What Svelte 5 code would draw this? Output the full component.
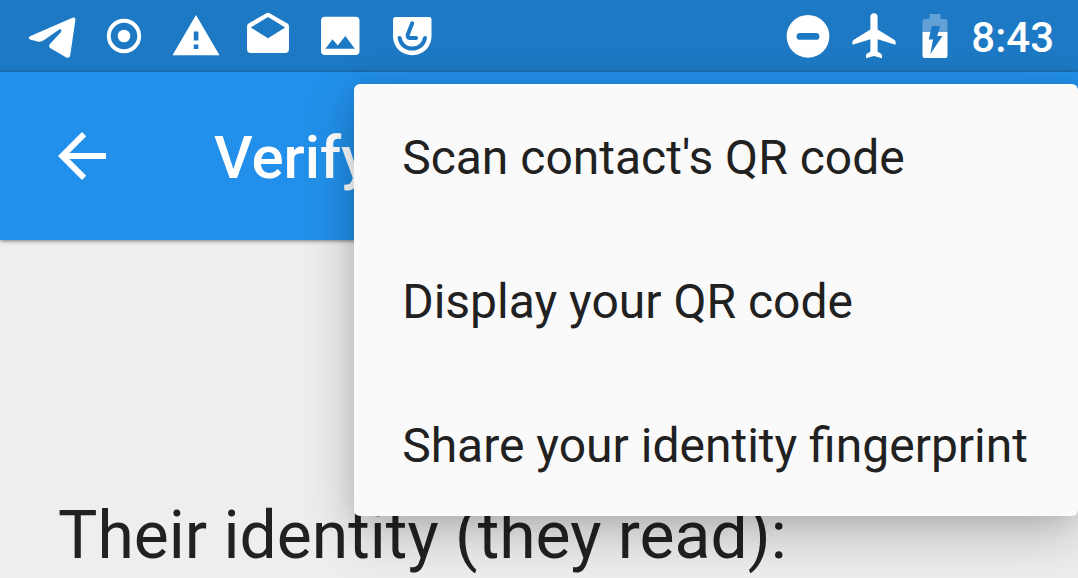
<script>
  const actions = [
    "Scan contact's QR code",
    'Display your QR code',
    'Share your identity fingerprint'
  ];
</script>

<div class="screen">
  <header class="status">
    <div class="notices">
      <svg viewBox="0 0 72 72" aria-hidden="true">
        <path d="M14 36.2 56.5 17.7Q59.7 16.7 59.4 20L54.2 55.5Q53.4 58.8 50.4 57.5L34.5 48.2Q32 46.5 34 44L45.2 31.8Q46 29 43.2 29.4L28.5 39.8Q25 42.4 21.5 41.6L14 39.4Q11.4 38 14 36.2Z" />
      </svg>
      <svg viewBox="0 0 72 72" aria-hidden="true">
        <circle cx="36" cy="36" r="15.2" fill="none" stroke="#fff" stroke-width="3.9" />
        <circle cx="36" cy="36" r="6.3" />
      </svg>
      <svg viewBox="0 0 72 72" aria-hidden="true">
        <path fill-rule="evenodd" d="M36 15 59.5 55.2H12.5ZM33.8 31.5V40.5H38.4V31.5ZM33.8 44.5V49H38.4V44.5Z" />
      </svg>
      <svg viewBox="0 0 72 72" aria-hidden="true">
        <path fill-rule="evenodd" d="M34 13.5Q36 12 38 13.5L55.5 23.5Q57 24.5 57 26.5V49Q57 53 53 53H19Q15 53 15 49V26.5Q15 24.5 16.5 23.5ZM36 17 18.8 27.5 36 38.2 53.2 27.5Z" />
      </svg>
      <svg viewBox="0 0 72 72" aria-hidden="true">
        <path fill-rule="evenodd" d="M21 16.7H51.5Q55.5 16.7 55.5 20.7V51Q55.5 55 51.5 55H21Q17 55 17 51V20.7Q17 16.7 21 16.7ZM21.4 48.7H50.8L41.3 36 33.8 45.6 28.5 39.3Z" />
      </svg>
      <svg viewBox="0 0 72 72" aria-hidden="true">
        <path d="M19.5 17H53Q55.5 17 55.5 19.5V36C55.5 47.5 46.5 55.200 36.2 55.2S17 47.5 17 36V19.5Q17 17 19.5 17Z" />
        <path class="cut" d="M36.200 23.3 31.8 34.5Q31 38 33.7 38H40" />
        <path class="cut" d="M23.6 38C25 45 30 48.6 36.2 48.6S47.5 45 49 38" />
      </svg>
    </div>
    <div class="system">
      <svg class="narrow" viewBox="0 0 44 72" role="img" aria-label="Do not disturb">
        <path fill-rule="evenodd" d="M22 14.9a21.4 21.4 0 1 0 0 42.8a21.4 21.4 0 1 0 0-42.8ZM14 33H30A3.4 3.4 0 0 1 30 39.8H14A3.4 3.4 0 0 1 14 33Z" />
      </svg>
      <svg class="narrow" viewBox="1 0 44 72" role="img" aria-label="Airplane mode">
        <path d="M18.4 17Q18.4 13.3 22 13.3T25.6 17V29.5L42.2 39.8Q43.6 40.7 43.6 42V44.7L25.6 39.2V51.5L29 53.8Q30 54.6 30 55.5V58.3L22 56 14 58.3V55.5Q14 54.6 15 53.8L18.4 51.5V39.2L.4 44.7V42Q.4 40.7 1.8 39.8L18.4 29.5Z" />
      </svg>
      <svg class="battery" viewBox="-2 0 28 72" role="img" aria-label="Battery charging">
        <path opacity=".3" d="M7.5 14H18.5V19H23Q25.5 19 25.5 21.5V32H.5V21.5Q.5 19 3 19H7.5Z" />
        <path d="M.5 32H25.5V56Q25.5 58 23.5 58H2.5Q.5 58 .5 56Z" />
        <path class="bolt" d="M9.8 26H18.3L15.2 35.9H20.5L8.3 54 11 39.6H6.7Z" />
      </svg>
      <time>8:43</time>
    </div>
  </header>

  <div class="toolbar">
    <button class="back" aria-label="Back">
      <svg viewBox="0 0 48 48" aria-hidden="true">
        <path d="M48 21V27H11.5L28.2 43.8 24 48 0 24 24 0 28.2 4.2 11.5 21Z" />
      </svg>
    </button>
    <h1>Verify</h1>
    <div class="menu" role="menu">
      {#each actions as action}
        <button role="menuitem">{action}</button>
      {/each}
    </div>
  </div>

  <main>
    <h2>Their identity (they read):</h2>
  </main>
</div>

<style>
  :global(body) {
    margin: 0;
    background: #eee;
    overflow: hidden;
  }

  .screen {
    min-height: 100vh;
    background: #eee;
    color: #212121;
    font-family: Roboto, sans-serif;
  }

  svg {
    display: block;
    overflow: visible;
    fill: #fff;
  }

  .status {
    display: flex;
    justify-content: space-between;
    height: 72px;
    padding: 0 24px 0 16px;
    background: #1d79c3;
    color: #fff;
  }

  .notices,
  .system {
    display: flex;
    align-items: center;
  }

  .notices svg {
    width: 72px;
    height: 72px;
  }

  .cut {
    fill: none;
    stroke: #1d79c3;
    stroke-width: 4;
    stroke-linecap: round;
    stroke-linejoin: round;
  }

  .system {
    gap: 23px;
  }

  .narrow {
    width: 44px;
    height: 72px;
  }

  .battery {
    width: 28px;
    height: 72px;
  }

  .bolt {
    fill: #1d79c3;
  }

  time {
    font-size: 42px;
    line-height: 72px;
    font-weight: 500;
    padding-top: 4px;
  }

  .toolbar {
    position: relative;
    display: flex;
    align-items: center;
    gap: 74px;
    height: 168px;
    padding-left: 24px;
    background: #2290ea;
    color: #fff;
    box-shadow: 0 1px 4px rgba(0, 0, 0, 0.5);
  }

  button {
    border: 0;
    background: none;
    color: inherit;
    font-family: inherit;
    cursor: pointer;
  }

  .back {
    padding: 34px;
  }

  .back svg {
    width: 48px;
    height: 48px;
  }

  h1 {
    margin: 0;
    padding-top: 4px;
    font-size: 60px;
    line-height: 72px;
    font-weight: 500;
  }

  .menu {
    position: absolute;
    top: 12px;
    right: 0;
    display: flex;
    flex-direction: column;
    border-radius: 6px;
    background: #fafafa;
    color: #212121;
    box-shadow: 0 18px 52px rgba(0, 0, 0, 0.24), 0 2px 24px rgba(0, 0, 0, 0.08);
  }

  .menu button {
    height: 144px;
    padding: 4px 50px 0 48px;
    font-size: 48px;
    line-height: 56px;
    text-align: left;
    white-space: nowrap;
  }

  main {
    padding: 256px 58px 0;
  }

  h2 {
    margin: 0;
    font-size: 66px;
    line-height: 80px;
    font-weight: 400;
    white-space: nowrap;
  }
</style>
